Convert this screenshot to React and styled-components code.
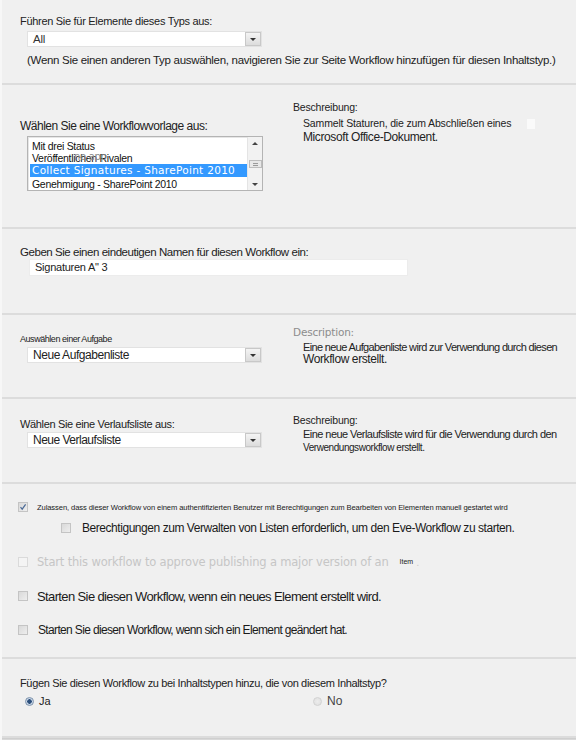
import React from 'react';
import styled, { createGlobalStyle } from 'styled-components';

const GlobalStyle = createGlobalStyle`
  html, body {
    margin: 0;
    padding: 0;
    background: #f0f0f0;
  }
  body {
    font-family: "Liberation Sans", Arial, sans-serif;
    color: #222;
  }
`;

const Page = styled.div`
  width: 576px;
  height: 740px;
  overflow: hidden;
  background: #f0f0f0;
  border-left: 2px solid #f7f7f7;
  box-sizing: border-box;
  display: flex;
  flex-direction: column;
`;

const Section = styled.div`
  height: ${(p) => p.$height}px;
  padding: ${(p) => p.$top || 0}px 0 0 16px;
  box-sizing: border-box;
  border-bottom: 2px solid #dcdcdc;
  flex-shrink: 0;
`;

const BottomBand = styled.div`
  flex: 1;
  background: #d9d9d9;
  border-top: 1px solid #cfcfcf;
`;

const Columns = styled.div`
  display: flex;
  align-items: flex-start;
`;

const LeftCol = styled.div`
  width: 275px;
  flex-shrink: 0;
  padding-top: ${(p) => p.$top || 0}px;
`;

const RightCol = styled.div`
  flex: 1;
  padding-top: ${(p) => p.$top || 0}px;
`;

const FieldLabel = styled.div`
  padding-left: 2px;
  font-size: ${(p) => p.$size || 11}px;
  line-height: 13px;
  letter-spacing: ${(p) => p.$spacing || 0}px;
  color: #222;
  white-space: nowrap;
`;

const Hint = styled.div`
  font-size: 11.5px;
  line-height: 13px;
  margin: 7px 0 0 9px;
  letter-spacing: -0.3px;
  color: #222;
  white-space: nowrap;
`;

const SelectBox = styled.div`
  margin: ${(p) => p.$top || 2}px 0 0 9px;
  width: 235px;
  height: 16px;
  background: #fff;
  border: 1px solid #e2e2e2;
  box-sizing: border-box;
  display: flex;
  align-items: center;
  justify-content: space-between;
`;

const SelectValue = styled.span`
  font-size: ${(p) => p.$size || 12}px;
  padding-left: 5px;
  color: ${(p) => p.$color || '#222'};
  letter-spacing: ${(p) => p.$spacing || -0.2}px;
  white-space: nowrap;
`;

const DropButton = styled.div`
  width: 16px;
  height: 14px;
  box-sizing: border-box;
  border: 1px solid #c8c8c8;
  background: linear-gradient(#f4f4f4, #dcdcdc);
  display: flex;
  align-items: center;
  justify-content: center;
  &::after {
    content: '';
    border-left: 3px solid transparent;
    border-right: 3px solid transparent;
    border-top: 3px solid #333;
  }
`;

const ListBox = styled.div`
  margin: 3px 0 0 9px;
  width: 236px;
  height: 55px;
  background: #fff;
  border: 1px solid #b4b4b4;
  box-shadow: inset 1px 1px 0 #e6e6e6;
  box-sizing: border-box;
  display: flex;
`;

const ListItems = styled.div`
  flex: 1;
  padding: 3px 0 0 2px;
  overflow: hidden;
`;

const ListItem = styled.div`
  position: relative;
  height: ${(p) => (p.$selected ? 13 : 12)}px;
  line-height: ${(p) => (p.$selected ? 13 : 12)}px;
  margin-bottom: ${(p) => (p.$selected ? 1 : 0)}px;
  padding-left: 2px;
  font-family: ${(p) => (p.$selected ? '"DejaVu Sans", Verdana, sans-serif' : '"Liberation Sans", Arial, sans-serif')};
  font-size: 10.5px;
  letter-spacing: ${(p) => (p.$selected ? 0.3 : -0.3)}px;
  background: ${(p) => (p.$selected ? '#3399ff' : 'transparent')};
  color: ${(p) => (p.$selected ? '#fff' : '#111')};
  white-space: nowrap;
`;

const Overlay = styled.span`
  position: absolute;
  left: 44px;
  top: -1px;
  font-family: "DejaVu Sans", Verdana, sans-serif;
  font-size: 10px;
  color: #8a8a8a;
`;

const ScrollBar = styled.div`
  width: 15px;
  background: #f2f2f2;
  border-left: 1px solid #e4e4e4;
  display: flex;
  flex-direction: column;
  align-items: center;
  justify-content: space-between;
  padding: 5px 0 4px;
  box-sizing: border-box;
`;

const Arrow = styled.div`
  border-left: 3px solid transparent;
  border-right: 3px solid transparent;
  ${(p) => (p.$up ? 'border-bottom: 3px solid #444;' : 'border-top: 3px solid #444;')}
`;

const Thumb = styled.div`
  width: 13px;
  height: 8px;
  border: 1px solid #bdbdbd;
  background: repeating-linear-gradient(#e6e6e6 0 1px, #9a9a9a 1px 2px) center / 5px 5px no-repeat, #e8e8e8;
  box-sizing: border-box;
`;

const DescLabel = styled.div`
  font-family: ${(p) => (p.$muted ? '"DejaVu Sans", Verdana, sans-serif' : '"Liberation Sans", Arial, sans-serif')};
  font-size: 10.5px;
  line-height: 13px;
  color: ${(p) => (p.$muted ? '#8c8c8c' : '#222')};
  letter-spacing: -0.2px;
`;

const DescText = styled.div`
  padding-left: 10px;
  margin-top: ${(p) => p.$top || 0}px;
  font-size: ${(p) => p.$size || 11}px;
  line-height: ${(p) => p.$line || 13}px;
  letter-spacing: ${(p) => p.$spacing || -0.3}px;
  color: #222;
  white-space: nowrap;
`;

const Patch = styled.span`
  display: inline-block;
  width: 8px;
  height: 10px;
  background: #fafafa;
  vertical-align: middle;
  margin-left: 16px;
`;

const TextInput = styled.div`
  margin: 0 0 0 11px;
  width: 379px;
  height: 17px;
  background: #fff;
  border: 1px solid #ececec;
  box-sizing: border-box;
  font-size: 11px;
  line-height: 15px;
  padding-left: 5px;
  letter-spacing: -0.25px;
  color: #222;
`;

const CheckList = styled.div`
  display: flex;
  flex-direction: column;
  padding-top: 17px;
`;

const CheckRow = styled.label`
  display: flex;
  align-items: center;
  height: ${(p) => p.$height}px;
  margin-top: ${(p) => p.$top || 0}px;
  padding-left: ${(p) => p.$indent || 0}px;
`;

const Box = styled.span`
  width: 10px;
  height: 10px;
  flex-shrink: 0;
  box-sizing: border-box;
  border: 1px solid ${(p) => (p.$disabled ? '#dadada' : '#c4c4c4')};
  background: ${(p) => (p.$disabled ? '#f4f4f4' : 'linear-gradient(135deg, #d9d9d9, #eeeeee)')};
  margin-right: ${(p) => p.$gap || 9}px;
  display: flex;
  align-items: center;
  justify-content: center;
`;

const OptionText = styled.span`
  font-family: ${(p) => (p.$alt ? '"DejaVu Sans", Verdana, sans-serif' : '"Liberation Sans", Arial, sans-serif')};
  font-size: ${(p) => p.$size || 13}px;
  letter-spacing: ${(p) => p.$spacing || 0}px;
  color: ${(p) => p.$color || '#1a1a1a'};
  white-space: nowrap;
`;

const Tiny = styled.span`
  font-size: 7px;
  color: #222;
  margin-left: 11px;
`;

const RadioRow = styled.div`
  display: flex;
  align-items: center;
  margin-top: 4px;
  padding-left: 7px;
`;

const RadioOption = styled.span`
  display: flex;
  align-items: center;
  width: ${(p) => p.$width}px;
  font-size: ${(p) => p.$size || 11}px;
  color: ${(p) => p.$color || '#222'};
`;

const RadioDot = styled.span`
  width: 9px;
  height: 9px;
  border-radius: 50%;
  box-sizing: border-box;
  margin-right: 5px;
  border: 1px solid ${(p) => (p.$on ? '#7d93ad' : '#d2d2d2')};
  background: ${(p) =>
    p.$on ? 'radial-gradient(circle, #2c4f7c 0 2px, #c9d6e6 2.5px)' : 'radial-gradient(circle, #ececec, #dedede)'};
`;

const CheckMark = () => (
  <svg width="8" height="8" viewBox="0 0 8 8">
    <path d="M1.5 4.2 L3.2 6.2 L6.6 1.4" fill="none" stroke="#4b6a96" strokeWidth="1.2" />
  </svg>
);

const templates = ['Mit drei Status', 'Veröffentlichen Rivalen', 'Collect Signatures - SharePoint 2010', 'Genehmigung - SharePoint 2010'];

const App = () => {
  return (
    <>
      <GlobalStyle />
      <Page>
        <Section $height={85} $top={15}>
          <FieldLabel $spacing={-0.3}>Führen Sie für Elemente dieses Typs aus:</FieldLabel>
          <SelectBox $top={3}>
            <SelectValue $size={11.5} $color="#333">All</SelectValue>
            <DropButton />
          </SelectBox>
          <Hint>(Wenn Sie einen anderen Typ auswählen, navigieren Sie zur Seite Workflow hinzufügen für diesen Inhaltstyp.)</Hint>
        </Section>

        <Section $height={144}>
          <Columns>
            <LeftCol $top={35}>
              <FieldLabel $size={12} $spacing={-0.5}>Wählen Sie eine Workflowvorlage aus:</FieldLabel>
              <ListBox>
                <ListItems>
                  {templates.map((t, i) => (
                    <ListItem key={t} $selected={i === 2}>
                      {t}
                      {i === 1 && <Overlay>no app</Overlay>}
                    </ListItem>
                  ))}
                </ListItems>
                <ScrollBar>
                  <Arrow $up />
                  <Thumb />
                  <Arrow />
                </ScrollBar>
              </ListBox>
            </LeftCol>
            <RightCol $top={16}>
              <DescLabel>Beschreibung:</DescLabel>
              <DescText $top={3} $size={10.5} $line={13} $spacing={-0.15}>
                Sammelt Staturen, die zum Abschließen eines<Patch />
              </DescText>
              <DescText $size={12} $line={14} $spacing={-0.4}>
                Microsoft Office-Dokument.
              </DescText>
            </RightCol>
          </Columns>
        </Section>

        <Section $height={86} $top={17}>
          <FieldLabel $size={11.5} $spacing={-0.45}>Geben Sie einen eindeutigen Namen für diesen Workflow ein:</FieldLabel>
          <TextInput>Signaturen A" 3</TextInput>
        </Section>

        <Section $height={84}>
          <Columns>
            <LeftCol $top={18}>
              <FieldLabel $size={9} $spacing={-0.45}>Auswählen einer Aufgabe</FieldLabel>
              <SelectBox $top={1}>
                <SelectValue $size={12} $spacing={-0.45}>Neue Aufgabenliste</SelectValue>
                <DropButton />
              </SelectBox>
            </LeftCol>
            <RightCol $top={11}>
              <DescLabel $muted>Description:</DescLabel>
              <DescText $top={2} $size={11} $line={12} $spacing={-0.65}>
                Eine neue Aufgabenliste wird zur Verwendung durch diesen
              </DescText>
              <DescText $size={12} $line={13} $spacing={-0.4}>
                Workflow erstellt.
              </DescText>
            </RightCol>
          </Columns>
        </Section>

        <Section $height={85}>
          <Columns>
            <LeftCol $top={19}>
              <FieldLabel $size={11} $spacing={-0.35}>Wählen Sie eine Verlaufsliste aus:</FieldLabel>
              <SelectBox $top={1}>
                <SelectValue $size={12} $spacing={-0.5}>Neue Verlaufsliste</SelectValue>
                <DropButton />
              </SelectBox>
            </LeftCol>
            <RightCol $top={15}>
              <DescLabel>Beschreibung:</DescLabel>
              <DescText $top={1} $size={11} $line={13} $spacing={-0.55}>
                Eine neue Verlaufsliste wird für die Verwendung durch den
              </DescText>
              <DescText $size={10} $line={13} $spacing={-0.45}>
                Verwendungsworkflow erstellt.
              </DescText>
            </RightCol>
          </Columns>
        </Section>

        <Section $height={175} $top={0}>
          <CheckList>
            <CheckRow $height={12}>
              <Box>
                <CheckMark />
              </Box>
              <OptionText $size={7.6} $spacing={-0.1}>
                Zulassen, dass dieser Workflow von einem authentifizierten Benutzer mit Berechtigungen zum Bearbeiten von Elementen manuell gestartet wird
              </OptionText>
            </CheckRow>
            <CheckRow $height={28} $indent={43} $top={1}>
              <Box $gap={11} />
              <OptionText $size={12} $spacing={-0.45}>
                Berechtigungen zum Verwalten von Listen erforderlich, um den Eve-Workflow zu starten.
              </OptionText>
            </CheckRow>
            <CheckRow $height={39}>
              <Box $disabled />
              <OptionText $alt $size={11.5} $spacing={-0.18} $color="#c6c6c6">
                Start this workflow to approve publishing a major version of an
              </OptionText>
              <Tiny>Item</Tiny>
              <OptionText $size={11} $color="#cfcfcf">&nbsp;.</OptionText>
            </CheckRow>
            <CheckRow $height={30}>
              <Box />
              <OptionText $size={13} $spacing={-0.62}>
                Starten Sie diesen Workflow, wenn ein neues Element erstellt wird.
              </OptionText>
            </CheckRow>
            <CheckRow $height={38}>
              <Box $gap={10} />
              <OptionText $size={12} $spacing={-0.65}>
                Starten Sie diesen Workflow, wenn sich ein Element geändert hat.
              </OptionText>
            </CheckRow>
          </CheckList>
        </Section>

        <Section $height={79} $top={18}>
          <FieldLabel $size={11} $spacing={-0.35}>Fügen Sie diesen Workflow zu bei Inhaltstypen hinzu, die von diesem Inhaltstyp?</FieldLabel>
          <RadioRow>
            <RadioOption $width={288}>
              <RadioDot $on />
              Ja
            </RadioOption>
            <RadioOption $size={12} $color="#444">
              <RadioDot />
              No
            </RadioOption>
          </RadioRow>
        </Section>
        <BottomBand />
      </Page>
    </>
  );
};

export default App;
